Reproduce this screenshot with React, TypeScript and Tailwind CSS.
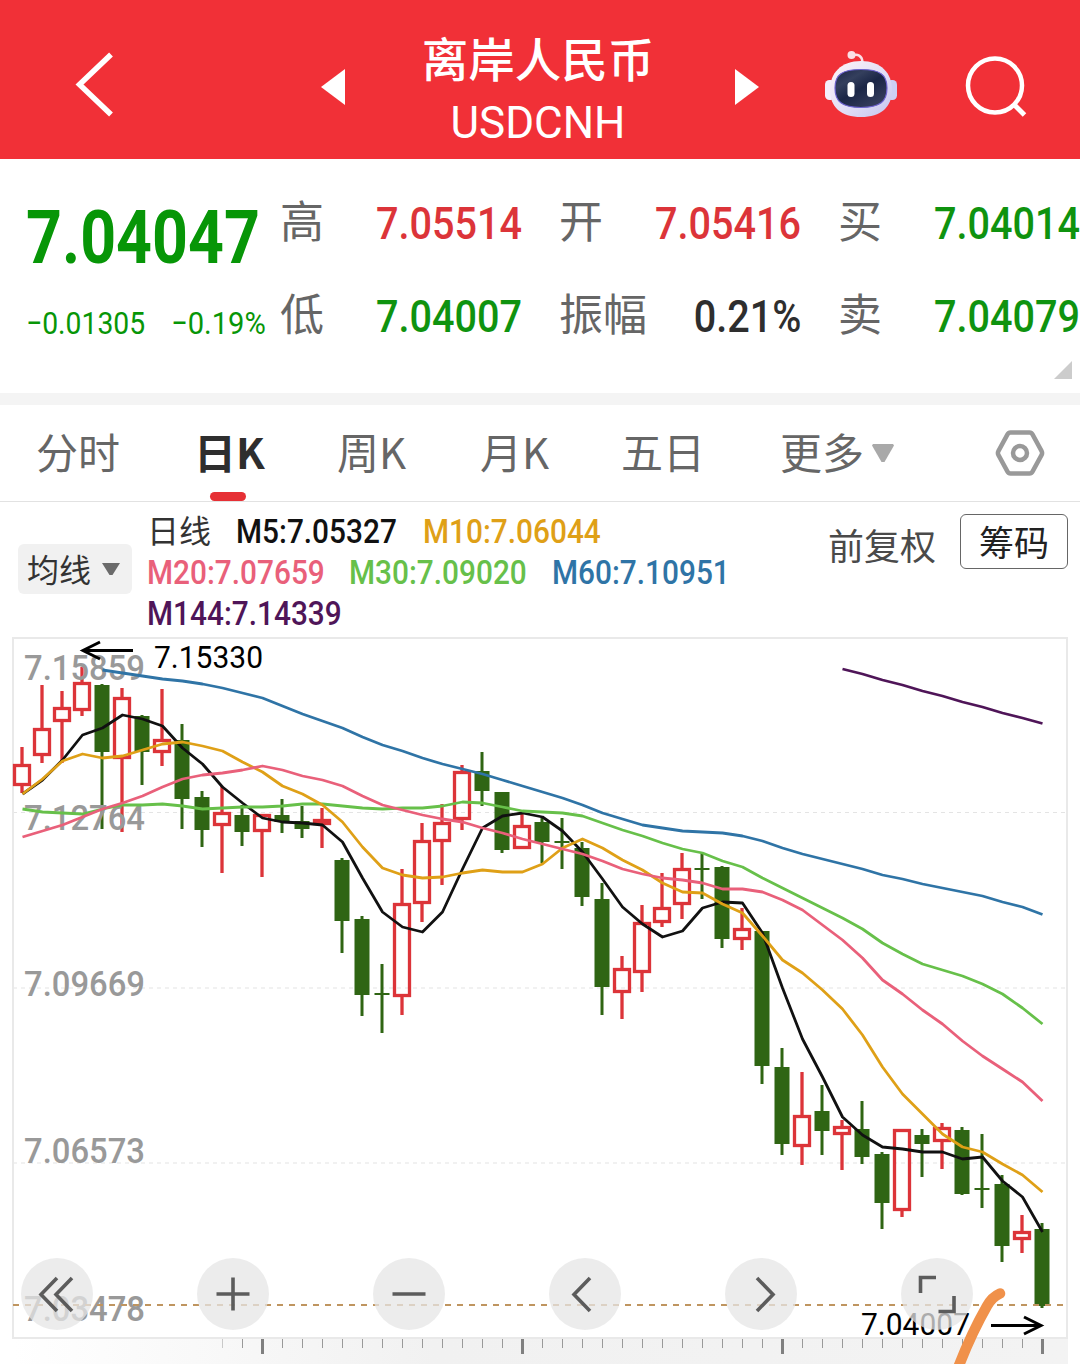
import clsx from "clsx";

type Candle = [high: number, top: number, bottom: number, low: number, up: 0 | 1];

const STEP = 20;
const X0 = 22;

// y positions on the canvas, one entry per trading day
const CANDLES: Candle[] = [
  [747, 764, 786, 793, 1], [685, 728, 756, 763, 1], [691, 707, 722, 763, 1], [667, 682, 711, 716, 1],
  [684, 685, 752, 829, 0], [688, 697, 759, 832, 1], [715, 716, 752, 785, 0], [689, 739, 753, 766, 1],
  [724, 740, 799, 829, 0], [791, 797, 830, 847, 0], [786, 812, 826, 873, 1], [805, 815, 832, 846, 0],
  [814, 814, 832, 877, 1], [799, 815, 822, 833, 0], [806, 821, 829, 838, 0], [808, 819, 825, 848, 1],
  [858, 860, 921, 953, 0], [916, 919, 995, 1016, 0], [964, 993, 995, 1033, 0], [869, 903, 997, 1015, 1],
  [823, 840, 904, 922, 1], [804, 822, 842, 885, 1], [765, 771, 820, 830, 1], [752, 771, 791, 806, 0],
  [792, 792, 850, 853, 0], [814, 825, 849, 849, 1], [818, 822, 842, 863, 0], [818, 841, 843, 869, 0],
  [842, 848, 897, 906, 0], [883, 899, 987, 1015, 0], [956, 968, 993, 1019, 1], [905, 922, 973, 992, 1],
  [873, 907, 923, 927, 1], [853, 868, 905, 919, 1], [853, 868, 870, 899, 0], [866, 867, 939, 948, 0],
  [908, 928, 940, 950, 1], [931, 931, 1066, 1084, 0], [1048, 1067, 1144, 1155, 0], [1072, 1115, 1147, 1165, 1],
  [1085, 1111, 1131, 1155, 0], [1120, 1126, 1135, 1170, 1], [1101, 1129, 1157, 1164, 0], [1152, 1154, 1203, 1229, 0],
  [1129, 1129, 1211, 1217, 1], [1129, 1135, 1144, 1177, 0], [1123, 1127, 1142, 1169, 1], [1127, 1130, 1194, 1195, 0],
  [1134, 1188, 1190, 1208, 0], [1175, 1184, 1246, 1262, 0], [1215, 1231, 1240, 1253, 1], [1223, 1229, 1306, 1308, 0],
];

const LINES = [
  {
    color: "#2f74a6",
    start: 4,
    ys: [670, 673, 676, 679, 681, 684, 688, 693, 698, 706, 714, 721, 728, 737, 745, 751, 758, 764, 769, 774, 780, 786, 792, 798, 805, 813, 819, 825, 828, 831, 832, 833, 836, 841, 848, 854, 859, 864, 869, 875, 879, 884, 888, 892, 896, 902, 907, 914.5],
  },
  {
    color: "#4f1558",
    start: 41,
    ys: [669, 674, 680, 685, 691, 696, 702, 707, 713, 718, 723.5],
  },
  {
    color: "#111111",
    start: 0,
    ys: [794, 780, 760, 735, 728, 715, 719, 726, 748, 764, 787, 803, 818, 822, 823, 825, 842, 878, 912, 927, 932, 912, 869, 828, 816, 813, 817, 831, 852, 879, 907, 924, 937, 931, 908, 902, 903, 933, 988, 1039, 1077, 1117, 1135, 1147, 1149, 1152, 1152, 1159, 1157, 1181, 1197, 1232],
  },
  {
    color: "#67c04a",
    start: 0,
    ys: [809, 812, 813, 814, 809, 805, 805, 804, 806, 809, 808, 807, 807, 806, 804, 804, 806, 808, 809, 808, 808, 806, 802, 803, 807, 811, 812, 813, 816, 823, 830, 836, 843, 849, 853, 861, 867, 878, 888, 898, 908, 918, 929, 943, 954, 964, 970, 976, 984, 994, 1008, 1024],
  },
  {
    color: "#dfa017",
    start: 0,
    ys: [794, 779, 761, 754, 758, 756, 750, 744, 742, 746, 751, 762, 772, 786, 794, 805, 822, 847, 868, 875, 878, 877, 873, 870, 872, 872, 864, 848, 839, 848, 860, 870, 883, 892, 893, 904, 913, 936, 960, 973, 990, 1009, 1035, 1067, 1094, 1114, 1134, 1147, 1152, 1164, 1175, 1192],
  },
  {
    color: "#e9607a",
    start: 0,
    ys: [837, 831, 825, 817, 809, 803, 796, 787, 779, 775, 773, 770, 766, 770, 776, 780, 786, 796, 805, 810, 815, 819, 822, 828, 833, 839, 844, 849, 854, 861, 869, 874, 878, 880, 883, 889, 889, 892, 900, 910, 925, 940, 958, 980, 994, 1010, 1024, 1041, 1056, 1069, 1082, 1101],
  },
];

const AXIS = [
  { label: "7.15859", y: 680 },
  { label: "7.12764", y: 830 },
  { label: "7.09669", y: 996 },
  { label: "7.06573", y: 1163 },
  { label: "7.03478", y: 1321 },
];

const QUOTES = [
  { label: "高", value: "7.05514", color: "text-[#dc3439]" },
  { label: "开", value: "7.05416", color: "text-[#dc3439]" },
  { label: "买", value: "7.04014", color: "text-[#0f930f]" },
  { label: "低", value: "7.04007", color: "text-[#0f930f]" },
  { label: "振幅", value: "0.21%", color: "text-[#2e2e2e]" },
  { label: "卖", value: "7.04079", color: "text-[#0f930f]" },
];

const TABS = [
  { label: "分时", box: "w-[84px] ml-9" },
  { label: "日K", box: "w-[70px] ml-[74px]", active: true },
  { label: "周K", box: "w-[70px] ml-[73px]" },
  { label: "月K", box: "w-[70px] ml-[73px]" },
  { label: "五日", box: "w-[84px] ml-[71px]" },
  { label: "更多", box: "w-[84px] ml-[75px]" },
];

function Header() {
  return (
    <header className="flex h-[159px] items-start bg-[#f13037] text-white">
      <svg className="mt-[50px] ml-[74px] h-[70px] w-[42px]" viewBox="0 0 42 70" fill="none" stroke="currentColor" strokeWidth="5.500">
        <path d="M37 4.500 5.500 34.500 37 64.500" />
      </svg>
      <svg className="mt-[69px] ml-[205px] h-9 w-6" viewBox="0 0 24 36" fill="currentColor">
        <path d="M24 0v36L0 18z" />
      </svg>
      <div className="mt-[29px] w-[390px] pr-1 text-center">
        <h1 className="text-[46.500px] leading-[56px] font-medium">离岸人民币</h1>
        <p className="mt-2.5 font-['Roboto'] text-[44px] leading-[56px]">USDCNH</p>
      </div>
      <svg className="mt-[69px] h-9 w-6" viewBox="0 0 24 36" fill="currentColor">
        <path d="M0 0v36l24-18z" />
      </svg>
      <Robot />
      <svg className="mt-[52px] ml-[65px] h-[68px] w-[66px]" viewBox="0 0 66 68" fill="none" stroke="currentColor" strokeWidth="4.500">
        <circle cx="32" cy="33.500" r="27" />
        <path d="m50.500 52 11 11" strokeWidth="5" />
      </svg>
    </header>
  );
}

function Robot() {
  return (
    <svg className="mt-[49px] ml-[65px] h-[70px] w-[74px]" viewBox="0 0 74 70" fill="none">
      <defs>
        <linearGradient id="shell" x1="0" y1="0" x2="1" y2="1">
          <stop offset="0" stopColor="#fff4f8" />
          <stop offset="0.600" stopColor="#dfdcf6" />
          <stop offset="1" stopColor="#c3c4ee" />
        </linearGradient>
        <linearGradient id="visor" x1="0" y1="0" x2="0.800" y2="1">
          <stop offset="0" stopColor="#1d2646" />
          <stop offset="0.300" stopColor="#343f5d" />
          <stop offset="0.550" stopColor="#1b2646" />
          <stop offset="1" stopColor="#38405f" />
        </linearGradient>
      </defs>
      <path d="M27 7c7-3 11 0 11.500 6" stroke="#fbdfe6" strokeWidth="2.500" />
      <circle cx="27.500" cy="6" r="4" fill="#fbdfe6" />
      <rect x="1" y="31" width="10" height="20" rx="4.500" fill="#f4effc" />
      <rect x="63" y="31" width="10" height="20" rx="4.500" fill="#cdd0f4" />
      <path d="M37 12c20 0 31 12 31 29S57 68 37 68 6 58 6 41s11-29 31-29z" fill="url(#shell)" />
      <path d="M37 20.500c19 0 26 5 26 18.500s-7 19.500-26 19.500S11 52.500 11 39s7-18.500 26-18.500z" fill="url(#visor)" stroke="#6d62cf" strokeWidth="1.200" />
      <rect x="23.500" y="33" width="7" height="15" rx="3.500" fill="#fff" />
      <rect x="43" y="33" width="7" height="15" rx="3.500" fill="#fff" />
    </svg>
  );
}

function Quote() {
  return (
    <section className="relative flex h-[234px] overflow-hidden">
      <div className="w-[280px] shrink-0 pl-[26px] font-['Roboto'] whitespace-nowrap text-[#079607]">
        <div className="mt-[39px] origin-left scale-x-[0.847] text-[74px] leading-[80px] font-bold">7.04047</div>
        <div className="mt-[25px] flex text-[32px] leading-10">
          <span className="w-[145px] origin-left scale-x-[0.885]">−0.01305</span>
          <span className="origin-left scale-x-[0.91]">−0.19%</span>
        </div>
      </div>
      <div className="mt-[33px] grid h-[186px] w-[837px] shrink-0 grid-cols-3 grid-rows-2">
        {QUOTES.map((q) => (
          <div key={q.label} className="flex h-[64px] items-start justify-between pr-[37px]">
            <span className="-mt-[5px] text-[44px] leading-[64px] text-[#666]">{q.label}</span>
            <span className={clsx("origin-right scale-x-[0.88] font-['Roboto'] text-[45px] leading-[64px] font-medium", q.color)}>
              {q.value}
            </span>
          </div>
        ))}
      </div>
      <svg className="absolute right-2 bottom-3.5 size-[18px]" viewBox="0 0 18 18" fill="#cccccc">
        <path d="M18 0v18H0z" />
      </svg>
    </section>
  );
}

function Tabs() {
  return (
    <nav className="flex h-[97px] items-center border-b border-[#e2e2e2] text-[42px] leading-[60px] text-[#666]">
      {TABS.map((tab) => (
        <div
          key={tab.label}
          className={clsx("relative flex h-full shrink-0 items-center pb-1 whitespace-nowrap", tab.box, tab.active && "font-bold text-[#2e2e2e]")}
        >
          {tab.label}
          {tab.active && <span className="absolute bottom-0 left-4 h-[9px] w-9 rounded-full bg-[#e63035]" />}
        </div>
      ))}
      <svg className="ml-2 h-[19px] w-[22px]" viewBox="0 0 22 19" fill="#a9a9a9">
        <path d="M1 0h20l1 1.500L12.500 18h-3L0 1.500z" />
      </svg>
      <svg className="ml-[101px] h-[50px] w-[50px]" viewBox="0 0 50 50" fill="none" stroke="#999999" strokeWidth="4.500" strokeLinejoin="round">
        <path d="M15.500 4.500h19q2 0 3 1.800l9 16.500q1.200 2.200 0 4.400l-9 16.500q-1 1.800-3 1.800h-19q-2 0-3-1.800l-9-16.500q-1.200-2.200 0-4.400l9-16.500q1-1.800 3-1.800z" />
        <circle cx="25" cy="25" r="7" />
      </svg>
    </nav>
  );
}

function Averages() {
  const item = "origin-left scale-x-[0.89] font-['Roboto'] text-[33.500px] font-medium";
  return (
    <section className="flex h-[135px] items-start">
      <button className="mt-[42px] ml-[18px] flex h-[50px] w-[114px] shrink-0 items-center rounded-md bg-[#f1f1f1] pl-[9px] text-[32px] leading-[50px] text-[#333]">
        <span className="-mt-[3px]">均线</span>
        <svg className="ml-[11px] h-3 w-[18px]" viewBox="0 0 18 12" fill="#6b6b6b">
          <path d="M0 0h18l-7.500 12h-3z" />
        </svg>
      </button>
      <div className="mt-[9px] ml-[15px] w-[681px] text-[32px] leading-[41px] whitespace-nowrap">
        <div className="flex h-[41px]">
          <span className="-mt-0.5 w-[89px] text-[#333]">日线</span>
          <span className={clsx(item, "w-[187px] text-[#111]")}>M5:7.05327</span>
          <span className={clsx(item, "text-[#dfa017]")}>M10:7.06044</span>
        </div>
        <div className="flex">
          <span className={clsx(item, "w-[202px] text-[#e9607a]")}>M20:7.07659</span>
          <span className={clsx(item, "w-[203px] text-[#67c04a]")}>M30:7.09020</span>
          <span className={clsx(item, "text-[#2f74a6]")}>M60:7.10951</span>
        </div>
        <div className="flex">
          <span className={clsx(item, "text-[#4f1558]")}>M144:7.14339</span>
        </div>
      </div>
      <span className="mt-4 w-[132px] shrink-0 text-[36px] leading-[52px] text-[#4a4a4a]">前复权</span>
      <button className="mt-3 h-[55px] w-[108px] shrink-0 rounded-md border border-[#666] pb-0.5 text-[35px] leading-[51px] text-[#222]">
        筹码
      </button>
    </section>
  );
}

function Chart() {
  return (
    <svg className="block h-[727px] w-[1080px] font-['Roboto']" viewBox="0 637 1080 727" fill="none">
      <defs>
        <linearGradient id="ruler" x1="0" y1="0" x2="1" y2="0">
          <stop offset="0" stopColor="#ffffff" />
          <stop offset="0.400" stopColor="#f1f1f1" />
          <stop offset="1" stopColor="#f3f3f3" />
        </linearGradient>
      </defs>
      <rect x="13" y="1338" width="1055" height="26" fill="url(#ruler)" />
      <path d="M13 812.500H1067M13 988H1067M13 1163H1067" stroke="#e4e4e4" strokeWidth="1.200" strokeDasharray="4 4" />
      <rect x="13" y="638" width="1054" height="700" stroke="#e9e9e9" strokeWidth="2" />

      {CANDLES.map(([high, top, bottom, low, up], i) => {
        const x = X0 + i * STEP;
        return up ? (
          <g key={i} stroke="#dc3439" strokeWidth="3.300">
            <path d={`M${x} ${high}V${top}M${x} ${bottom}V${low}`} />
            <rect x={x - 7.5} y={top + 1.5} width="15" height={bottom - top - 3} />
          </g>
        ) : (
          <g key={i} fill="#2f6513">
            <rect x={x - 1.5} y={high} width="3" height={low - high} />
            <rect x={x - 7.5} y={top} width="15" height={bottom - top} />
          </g>
        );
      })}

      {AXIS.map((a) => (
        <text key={a.label} x="24" y={a.y} fill="#999999" fontSize="35" fontWeight="500" textLength="121" lengthAdjust="spacingAndGlyphs">
          {a.label}
        </text>
      ))}
      <path d="M13 1305H1067" stroke="#bf9560" strokeWidth="2" strokeDasharray="6 6" />

      {LINES.map((line) => (
        <polyline
          key={line.color}
          points={line.ys.map((y, i) => `${X0 + 0.5 + (line.start + i) * STEP},${y}`).join(" ")}
          stroke={line.color}
          strokeWidth="2.800"
          strokeLinejoin="round"
        />
      ))}

      <g fill="#000" fontSize="31">
        <text x="154" y="668" textLength="109" lengthAdjust="spacingAndGlyphs">7.15330</text>
        <text x="861" y="1335" textLength="109" lengthAdjust="spacingAndGlyphs">7.04007</text>
      </g>
      <g stroke="#000" strokeWidth="3">
        <path d="M133 650.500H83M100 642 83 650.500l17 8.500" />
        <path d="M991 1325.500h50M1024 1317l17 8.500-17 8.500" />
      </g>

      {/* date ruler */}
      {Array.from({ length: 42 }, (_, i) => {
        const x = 222 + i * STEP;
        const major = (x - 262) % 260 === 0;
        return (
          <path
            key={x}
            d={`M${x + 0.5} 1339V${major ? 1354 : 1348}`}
            stroke={major ? "#808080" : "#999999"}
            strokeWidth={major ? 3 : 1}
            opacity={i === 0 ? 0.5 : 1}
          />
        );
      })}
    </svg>
  );
}

const CONTROLS = [
  { name: "first", d: "M36 20 20 36.500 36 53M51 20 35 36.500 51 53" },
  { name: "zoom in", d: "M36 19.500v33M19.500 36h33" },
  { name: "zoom out", d: "M19.500 36h33" },
  { name: "previous", d: "M41 20 25 36.500 41 53" },
  { name: "next", d: "M32 20l16 16.500L32 53" },
  { name: "fullscreen", d: "M19.500 35V19.500H35M37.500 53.500H53V38" },
];

export default function App() {
  return (
    <div className="h-[1364px] w-[1080px] overflow-hidden bg-white font-['Noto_Sans_CJK_SC',sans-serif]">
      <Header />
      <Quote />
      <div className="h-3 bg-[#f4f4f4]" />
      <Tabs />
      <Averages />
      <div className="relative">
        <Chart />
        <div className="absolute top-[621px] left-[21px] flex gap-[104px]">
          {CONTROLS.map((c) => (
            <button key={c.name} aria-label={c.name} className="size-[72px] rounded-full bg-[#e5e5e5]/75">
              <svg viewBox="0 0 72 72" fill="none" stroke="#5c5c5c" strokeWidth="3.600">
                <path d={c.d} />
              </svg>
            </button>
          ))}
        </div>
        <svg className="absolute right-[71px] bottom-0 h-20 w-[60px]" viewBox="0 0 60 80" fill="none">
          <path d="M51 9.500Q43 13 38 22 22 50 9 84" stroke="#f0914a" strokeWidth="10.500" strokeLinecap="round" />
        </svg>
      </div>
    </div>
  );
}
